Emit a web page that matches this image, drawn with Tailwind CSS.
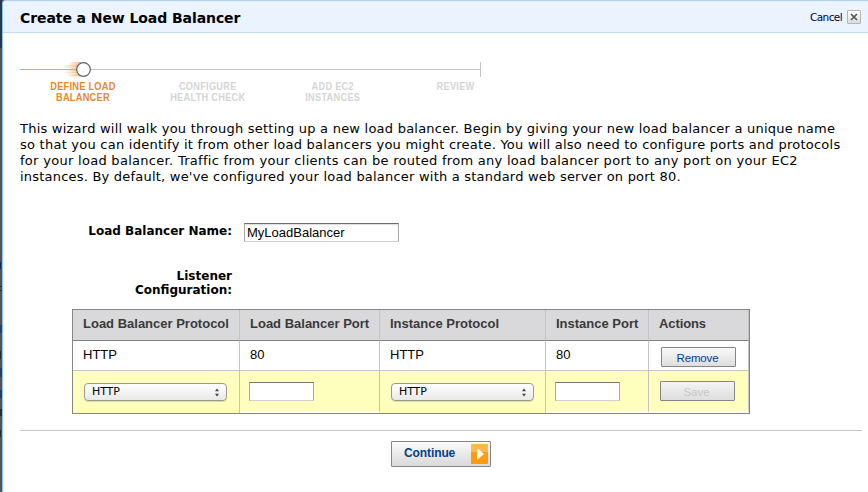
<!DOCTYPE html>
<html lang="en">
<head>
<meta charset="utf-8">
<title>Create a New Load Balancer</title>
<script src="https://cdn.jsdelivr.net/npm/@tailwindcss/browser@4"></script>
</head>
<body class="h-[492px] w-[868px] overflow-hidden bg-[#4d5663] pl-[2px] text-black font-['DejaVu_Sans',Verdana,sans-serif]">
<!-- page edge showing behind the dialog -->
<div class="absolute left-0 top-0 h-[492px] w-[2px] bg-[#50545a]">
  <div class="absolute top-0 h-[48px] w-[2px] bg-[#26374f]"></div>
  <div class="absolute top-[262px] h-[7px] w-[1px] bg-[#102a52]"></div>
  <div class="absolute top-[286px] h-[1px] w-[2px] bg-[#282c32]"></div>
  <div class="absolute top-[290px] h-[1px] w-[2px] bg-[#282c32]"></div>
  <div class="absolute top-[325px] h-[8px] w-[2px] bg-[#243d60]"></div>
  <div class="absolute top-[351px] h-[8px] w-[1px] bg-[#25282d]"></div>
  <div class="absolute top-[368px] h-[9px] w-[2px] bg-[#243d60]"></div>
  <div class="absolute top-[390px] h-[8px] w-[2px] bg-[#243d60]"></div>
  <div class="absolute top-[409px] h-[7px] w-[2px] bg-[#292c32]"></div>
  <div class="absolute top-[430px] h-[7px] w-[1px] bg-[#222a35]"></div>
</div>
<main class="h-[492px] rounded-tl-[4px] border-l border-t border-l-[#8fc4ea] border-t-[#a9d1ee] bg-white">
  <header class="flex h-[32px] items-center justify-between rounded-tl-[3px] border-b border-[#bcdcf4] bg-[#eaf3fe] pl-[17px] pr-[7px]">
    <h1 class="whitespace-nowrap pt-[2px] text-[14px] font-bold leading-[18px] tracking-[-0.08px]">Create a New Load Balancer</h1>
    <div class="flex items-center gap-[5px] pt-px">
      <span class="whitespace-nowrap pt-[2px] text-[10.500px] tracking-[-0.6px] text-[#000055]">Cancel</span>
      <button class="flex h-[14px] w-[14px] items-center justify-center rounded-[1px] border border-[#b5b5b5] bg-linear-to-b from-white to-[#dcdcdc]" aria-label="Close">
        <svg width="8" height="8" viewBox="0 0 8 8" fill="none" stroke="#555" stroke-width="1.7"><path d="M1 1l6 6M7 1l-6 6"/></svg>
      </button>
    </div>
  </header>

  <section class="pl-[17px] pt-[28px] font-['Liberation_Sans',Arial,sans-serif]">
    <svg class="block" width="462" height="18" viewBox="0 0 462 18">
      <defs><linearGradient id="trail"><stop offset="0" stop-color="#f0a050" stop-opacity="0"/><stop offset="1" stop-color="#eda35c" stop-opacity=".75"/></linearGradient></defs>
      <rect x="0" y="8" width="56" height="1" fill="#eba45c"/>
      <rect x="69" y="8" width="391" height="1" fill="#c4c4c4"/>
      <rect x="460" y="1" width="1" height="15" fill="#c4c4c4"/>
      <g fill="url(#trail)"><rect x="48" y="1" width="13" height="3"/><rect x="43" y="4" width="15" height="2.500"/><rect x="46" y="7" width="12" height="3"/><rect x="43" y="10.500" width="15" height="2"/><rect x="47" y="13" width="13" height="2.500"/></g>
      <circle cx="63.500" cy="8.500" r="6.800" fill="#fff" stroke="#5d6368" stroke-width="1.200"/>
    </svg>
    <ol class="flex h-[42px] pt-[2px] text-center text-[11px] font-bold leading-[11px] text-[#d5d5d5]">
      <li class="w-[126px]"><span class="inline-block origin-center scale-x-[.84] whitespace-nowrap tracking-[0.3px] text-[#e38a30]">DEFINE LOAD<br>BALANCER</span></li>
      <li class="w-[124px]"><span class="inline-block origin-center scale-x-[.84] whitespace-nowrap tracking-[0.3px]">CONFIGURE<br>HEALTH CHECK</span></li>
      <li class="w-[126px]"><span class="inline-block origin-center scale-x-[.84] whitespace-nowrap tracking-[0.3px]">ADD EC2<br>INSTANCES</span></li>
      <li class="w-[120px]"><span class="inline-block origin-center scale-x-[.84] whitespace-nowrap tracking-[0.3px]">REVIEW</span></li>
    </ol>
  </section>

  <p class="h-[64px] whitespace-nowrap pl-[17px] text-[13px] leading-[16px]">
    <span class="block tracking-[0.230px]">This wizard will walk you through setting up a new load balancer. Begin by giving your new load balancer a unique name</span>
    <span class="block tracking-[0.245px]">so that you can identify it from other load balancers you might create. You will also need to configure ports and protocols</span>
    <span class="block tracking-[0.292px]">for your load balancer. Traffic from your clients can be routed from any load balancer port to any port on your EC2</span>
    <span class="block tracking-[0.215px]">instances. By default, we've configured your load balancer with a standard web server on port 80.</span>
  </p>

  <form>
    <div class="flex pt-[37px]">
      <label class="w-[229px] whitespace-nowrap text-right text-[12px] font-bold leading-[18px]">Load Balancer Name:</label>
      <div class="ml-[12px] mt-px h-[19px] w-[155px] border border-b-[#cfcfcf] border-l-[#a8a8a8] border-r-[#a8a8a8] border-t-[#6c6c6c] pl-[2px] font-['Liberation_Sans',Arial,sans-serif] text-[13px] leading-[18px] shadow-[inset_0_1px_1px_#ddd]">MyLoadBalancer</div>
    </div>
    <div class="w-[229px] pt-[27px] text-right text-[12px] font-bold leading-[14px]">Listener<br>Configuration:</div>

    <table class="ml-[69px] mt-[12px] w-[678px] table-fixed border-separate border-spacing-0 border border-[#858585] text-left font-['Liberation_Sans',Arial,sans-serif] text-[13px]">
      <colgroup><col class="w-[167px]"><col class="w-[140px]"><col class="w-[166px]"><col class="w-[103px]"><col class="w-[100px]"></colgroup>
      <thead>
        <tr class="h-[31px] whitespace-nowrap bg-[#d9d9db] text-[#3a3a3a]">
          <th class="border-b border-r border-b-[#808080] border-r-[#c4c4c4] p-0 pl-[10px] pb-[2px]">Load Balancer Protocol</th>
          <th class="border-b border-r border-b-[#808080] border-r-[#c4c4c4] p-0 pl-[10px] pb-[2px]">Load Balancer Port</th>
          <th class="border-b border-r border-b-[#808080] border-r-[#c4c4c4] p-0 pl-[10px] pb-[2px]">Instance Protocol</th>
          <th class="border-b border-r border-b-[#808080] border-r-[#c4c4c4] p-0 pl-[10px] pb-[2px]">Instance Port</th>
          <th class="border-b border-r border-b-[#808080] border-r-[#c4c4c4] p-0 pl-[10px] pb-[2px] tracking-[-0.1px]">Actions</th>
        </tr>
      </thead>
      <tbody>
        <tr class="h-[30px]">
          <td class="border-b border-r border-[#c4c4c4] p-0 pl-[10px] pb-[2px]">HTTP</td>
          <td class="border-b border-r border-[#c4c4c4] p-0 pl-[10px] pb-[2px]">80</td>
          <td class="border-b border-r border-[#c4c4c4] p-0 pl-[10px] pb-[2px]">HTTP</td>
          <td class="border-b border-r border-[#c4c4c4] p-0 pl-[10px] pb-[2px]">80</td>
          <td class="border-b border-r border-[#c4c4c4] p-0 pl-[12px] pt-[3px]"><button type="button" class="block h-[20px] w-[75px] rounded-[1px] border border-[#858585] bg-linear-to-b from-[#fafafa] to-[#dedede] pr-[2px] text-[11.500px] leading-[20px] tracking-[-0.15px] text-[#003f8c]">Remove</button></td>
        </tr>
        <tr class="h-[42px]">
          <td class="border-r border-[#c4c4c4] bg-[#ffffbd] p-0 pl-[11px]">
            <div class="flex h-[18px] w-[143px] items-center justify-between rounded-[4px] border border-[#9b9b85] bg-linear-to-b from-white to-[#e9e9e9] pl-[7px] pr-[6px] font-['DejaVu_Sans'] text-[11px] shadow-[0_1px_0_#ddddb0]"><span class="tracking-[-0.1px]">HTTP</span><svg width="6" height="9" viewBox="0 0 6 9" fill="#444"><path d="M3 .5l2 2.800h-4zM3 8.500L1 5.700h4z"/></svg></div>
          </td>
          <td class="border-b-2 border-r border-b-white border-r-[#c4c4c4] bg-[#ffffbd] p-0 pl-[9px]"><div class="h-[19px] w-[65px] border border-b-[#cfcfcf] border-l-[#a8a8a8] border-r-[#a8a8a8] border-t-[#777] bg-white"></div></td>
          <td class="border-r border-[#c4c4c4] bg-[#ffffbd] p-0 pl-[11px]">
            <div class="flex h-[18px] w-[143px] items-center justify-between rounded-[4px] border border-[#9b9b85] bg-linear-to-b from-white to-[#e9e9e9] pl-[7px] pr-[6px] font-['DejaVu_Sans'] text-[11px] shadow-[0_1px_0_#ddddb0]"><span class="tracking-[-0.1px]">HTTP</span><svg width="6" height="9" viewBox="0 0 6 9" fill="#444"><path d="M3 .5l2 2.800h-4zM3 8.500L1 5.700h4z"/></svg></div>
          </td>
          <td class="border-b-2 border-r border-b-white border-r-[#c4c4c4] bg-[#ffffbd] p-0 pl-[9px]"><div class="h-[19px] w-[65px] border border-b-[#cfcfcf] border-l-[#a8a8a8] border-r-[#a8a8a8] border-t-[#777] bg-white"></div></td>
          <td class="border-b-2 border-r border-b-white border-r-[#c4c4c4] bg-[#ffffbd] p-0 pl-[11px]"><button type="button" class="block h-[20px] w-[75px] rounded-[1px] border border-[#858585] bg-linear-to-b from-[#f4f4f4] to-[#dedede] pr-[2px] text-[11.500px] leading-[20px] text-[#c6c6c6]">Save</button></td>
        </tr>
      </tbody>
    </table>

    <div class="ml-[17px] mr-[6px] mt-[16px] h-px bg-[#c8c8c8]"></div>
    <button type="button" class="ml-[388px] mt-[10px] flex h-[26px] w-[100px] items-center justify-between rounded-[1px] border border-[#858585] bg-linear-to-b from-[#fbfbfb] to-[#d9d9d9] pl-[12px] pr-[2px] font-['Liberation_Sans',Arial,sans-serif] text-[12px] font-bold text-[#003f8c]">
      <span class="pb-[2px] tracking-[-0.1px]">Continue</span>
      <svg width="17" height="20" viewBox="0 0 17 20"><path fill="#ffb94d" d="M0 0h17v10H0z"/><path fill="#ff9c0d" d="M0 8h17v12H0z"/><path fill="#fff" d="M6 4l7 6-7 6z"/></svg>
    </button>
  </form>
</main>
</body>
</html>
